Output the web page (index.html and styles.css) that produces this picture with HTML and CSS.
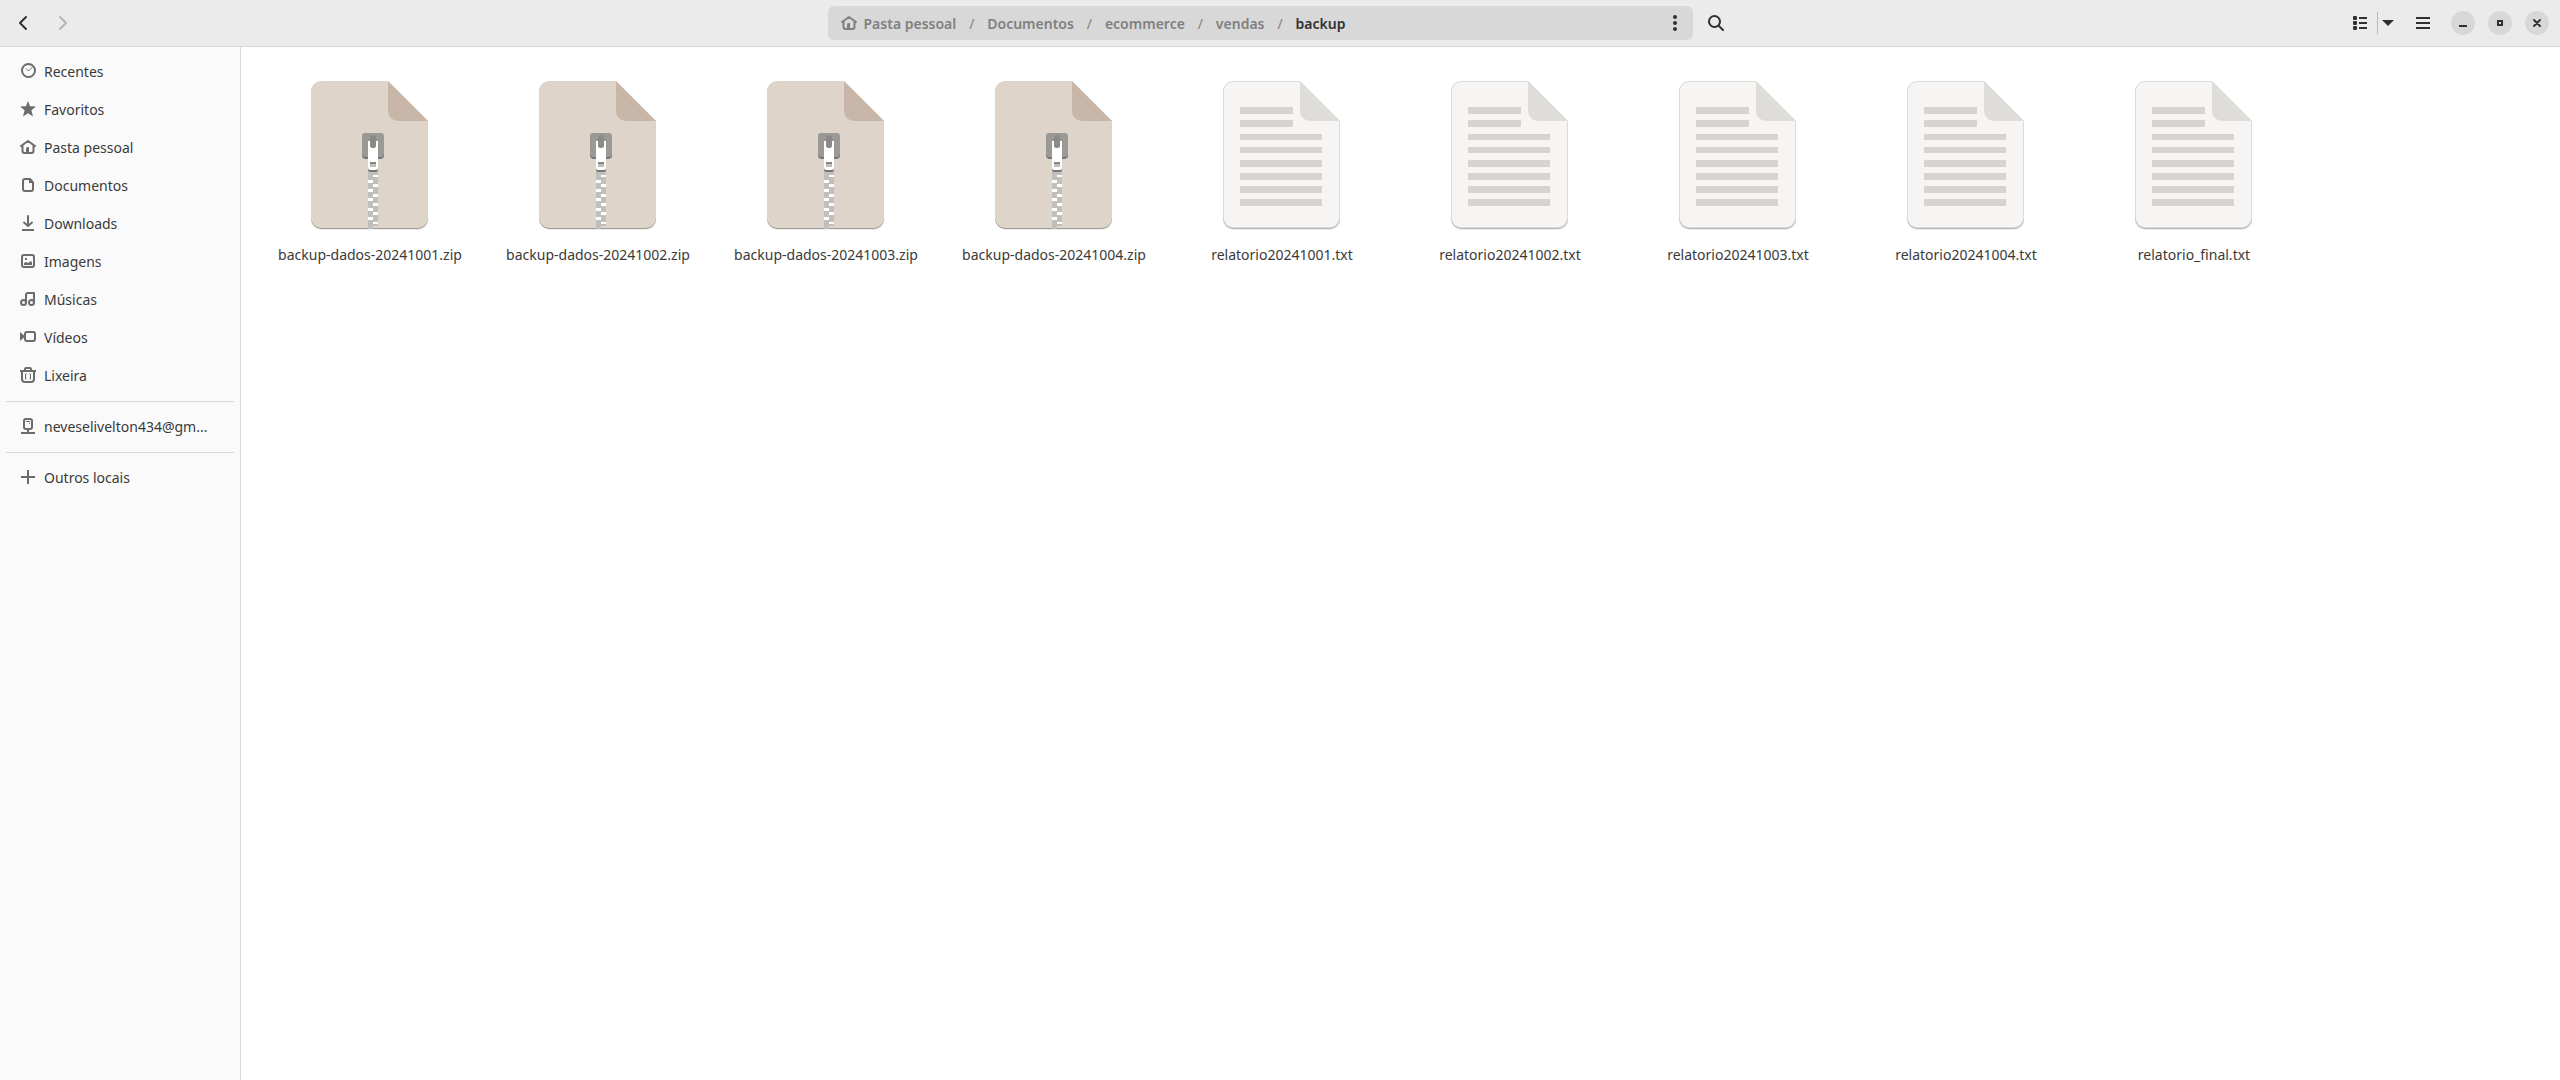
FILE: index.html
```html
<!DOCTYPE html>
<html lang="pt-BR">
<head>
<meta charset="utf-8">
<title>backup</title>
<link rel="stylesheet" href="styles.css">
</head>
<body>
<svg class="sprite" aria-hidden="true">
  <symbol id="home" viewBox="0 0 16 16"><path d="M1 7 8 2l7 5M2.500 7v5a2 2 0 0 0 2 2h7a2 2 0 0 0 2-2V7" fill="none" stroke="currentColor" stroke-width="2" stroke-linecap="round" stroke-linejoin="round"/><path d="M6 14V9.500a1.500 1.500 0 0 1 1.500-1.500H9v6z" fill="currentColor"/></symbol>
  <symbol id="zip" viewBox="0 0 118 152">
    <path d="M11 2h66l40 40v97a10 10 0 0 1-10 10H11a10 10 0 0 1-10-10V12A10 10 0 0 1 11 2z" fill="#000" opacity=".08"/>
    <path d="M10 1h67l40 40v97a10 10 0 0 1-10 10H10a10 10 0 0 1-10-10V11A10 10 0 0 1 10 1z" fill="#a19c98"/>
    <path d="M10 0h67l40 40v97a10 10 0 0 1-10 10H10a10 10 0 0 1-10-10V10A10 10 0 0 1 10 0z" fill="#ded4ca"/>
    <path d="M77 0l40 40H87a10 10 0 0 1-10-10z" fill="#c8b7a8"/>
    <path d="M57 91h10v54h-5v3h-5z" fill="#c0bfbc"/>
    <path d="M57 99h5v3h-5zm0 9h5v3h-5zm0 9h5v3h-5zm0 10h5v3h-5zm0 9h5v3h-5zM62 94h5v2h-5zm0 9h5v3h-5zm0 10h5v3h-5zm0 9h5v3h-5zm0 9h5v3h-5zm0 10h5v2h-5z" fill="#fff"/>
    <path d="M51 57h22v17q0 4-4 4H55q-4 0-4-4z" fill="#77767b"/>
    <path d="M54 52h16q3 0 3 3v17q0 4-4 4H55q-4 0-4-4V55q0-3 3-3z" fill="#9a9996"/>
    <path d="M57 80h10v9q0 2-2 2h-6q-2 0-2-2z" fill="#77767b"/>
    <path d="M57 60h2v4a3 3 0 0 0 6 0v-4h2v27q0 2-2 2h-6q-2 0-2-2z" fill="#fff"/>
    <path d="M59 57a3 3 0 0 1 6 0v7a3 3 0 0 1-6 0z" fill="#8b8a88"/>
    <path d="M59 81h6v5h-6z" fill="#c0bfbc"/><path d="M59 81h6v2h-6z" fill="#868583"/>
  </symbol>
  <symbol id="txt" viewBox="0 0 118 152">
    <path d="M11 2h66l40 40v97a10 10 0 0 1-10 10H11a10 10 0 0 1-10-10V12A10 10 0 0 1 11 2z" fill="#000" opacity=".08"/>
    <path d="M10 1h67l40 40v97a10 10 0 0 1-10 10H10a10 10 0 0 1-10-10V11A10 10 0 0 1 10 1z" fill="#b9b8b6"/>
    <path d="M10 0h67l40 40v97a10 10 0 0 1-10 10H10a10 10 0 0 1-10-10V10A10 10 0 0 1 10 0z" fill="#dcdbd9"/>
    <path d="M10 1h67l39 39v97a9 9 0 0 1-9 9H10a9 9 0 0 1-9-9V10A9 9 0 0 1 10 1z" fill="#f6f5f4"/>
    <path d="M77 0l40 40H87a10 10 0 0 1-10-10z" fill="#deddda"/>
    <path d="M17 26h53v7H17zm0 13h53v7H17zm0 14h82v6H17zm0 13h82v6H17zm0 13h82v7H17zm0 13h82v7H17zm0 13h82v7H17zm0 13h82v7H17z" fill="#d5d4d1"/>
  </symbol>
</svg>

<header class="header">
  <div class="header-start">
    <button class="tool" aria-label="Voltar"><svg viewBox="0 0 16 16"><path d="M11 2 5 8l6 6" class="line"/></svg></button>
    <button class="tool" aria-label="Avançar" disabled><svg viewBox="0 0 16 16"><path d="M5 2l6 6-6 6" class="line"/></svg></button>
  </div>
  <div class="header-center">
    <nav class="pathbar" aria-label="Caminho">
      <a class="crumb" href="#"><svg><use href="#home"/></svg>Pasta pessoal</a><span class="slash">/</span>
      <a class="crumb" href="#">Documentos</a><span class="slash">/</span>
      <a class="crumb" href="#">ecommerce</a><span class="slash">/</span>
      <a class="crumb" href="#">vendas</a><span class="slash">/</span>
      <a class="crumb current" href="#" aria-current="page">backup</a>
      <button class="tool more" aria-label="Mais opções"><svg viewBox="0 0 16 16"><circle cx="8" cy="2" r="2"/><circle cx="8" cy="8" r="2"/><circle cx="8" cy="14" r="2"/></svg></button>
    </nav>
    <button class="tool" aria-label="Pesquisar"><svg viewBox="0 0 16 16"><circle cx="6.500" cy="6.500" r="5.500" class="line"/><path d="M10.600 10.600 15 15" class="line"/></svg></button>
  </div>
  <div class="header-end">
    <div class="view-switch">
      <button class="tool" aria-label="Exibir como lista"><svg viewBox="0 0 16 16"><rect x="1" y="1" width="4" height="4" rx="1"/><rect x="1" y="6" width="4" height="4" rx="1"/><rect x="1" y="11" width="4" height="4" rx="1"/><path d="M7 2h8v2H7zm0 5h8v2H7zm0 5h8v2H7z"/></svg></button>
      <button class="tool narrow" aria-label="Opções de exibição"><svg viewBox="0 0 16 16"><path d="M2 5h12l-6 6z"/></svg></button>
    </div>
    <button class="tool" aria-label="Menu"><svg viewBox="0 0 16 16"><path d="M1 2h14v2H1zm0 5h14v2H1zm0 5h14v2H1z"/></svg></button>
    <div class="window-controls">
      <button class="round" aria-label="Minimizar"><svg viewBox="0 0 16 16"><path d="M4 10h8v2H4z"/></svg></button>
      <button class="round" aria-label="Maximizar"><svg viewBox="0 0 16 16"><path d="M5 5h6v6H5zm2 2v2h2V7z" fill-rule="evenodd"/></svg></button>
      <button class="round" aria-label="Fechar"><svg viewBox="0 0 16 16"><path d="M5 5l6 6m0-6-6 6" class="line"/></svg></button>
    </div>
  </div>
</header>

<div class="body">
  <nav class="sidebar" aria-label="Locais">
    <a class="place" href="#"><svg viewBox="0 0 16 16"><circle cx="8.500" cy="7.500" r="6.500" class="line"/><path d="M6 5.500l2.500 2.500 4-4" fill="none" stroke="currentColor"/></svg><span>Recentes</span></a>
    <a class="place" href="#"><svg viewBox="0 0 16 16"><path d="M8 0l2 5.300 6 .2-4.600 3.700L13 15.500l-5-3.300-5 3.300 1.600-6.300L0 5.500l6-.2z"/></svg><span>Favoritos</span></a>
    <a class="place" href="#"><svg><use href="#home"/></svg><span>Pasta pessoal</span></a>
    <a class="place" href="#"><svg viewBox="0 0 16 16"><path d="M5 2h5l3 3.500V12a2 2 0 0 1-2 2H5a2 2 0 0 1-2-2V4a2 2 0 0 1 2-2z" class="line"/><path d="M9 2v4h4l-3-4z"/></svg><span>Documentos</span></a>
    <a class="place" href="#"><svg viewBox="0 0 16 16"><path d="M8 1v10M4 7.500 8 11l4-3.500" class="line"/><path d="M2 14h12v2H2z"/></svg><span>Downloads</span></a>
    <a class="place" href="#"><svg viewBox="0 0 16 16"><rect x="2" y="2" width="12" height="12" rx="2" class="line"/><path d="M4 12V10l2-1 2 1 3-2 1 1.500V12zM5 5h2v2H5z"/></svg><span>Imagens</span></a>
    <a class="place" href="#"><svg viewBox="0 0 16 16"><circle cx="3.500" cy="11.500" r="2.500" class="line"/><circle cx="11.500" cy="11.500" r="2.500" class="line"/><path d="M6 11V4a2 2 0 0 1 2-2h6v9.500" class="line"/></svg><span>Músicas</span></a>
    <a class="place" href="#"><svg viewBox="0 0 16 16"><rect x="5" y="3" width="10" height="9" rx="2" class="line"/><path d="M0 3l4 3.500v2L0 12z"/></svg><span>Vídeos</span></a>
    <a class="place" href="#"><svg viewBox="0 0 16 16"><path d="M0 3h16v2H0z"/><path d="M5 3V2q0-1 1-1h4q1 0 1 1v1M2 4v8a3 3 0 0 0 3 3h6a3 3 0 0 0 3-3V4" class="line"/><path d="M6.500 7H5.500v5h1M9.500 7h1v5h-1" fill="none" stroke="currentColor"/></svg><span>Lixeira</span></a>
    <hr>
    <a class="place" href="#"><svg viewBox="0 0 16 16"><rect x="4" y="1" width="8" height="10" rx="2" class="line"/><path d="M7 11h2v3h6v2H1v-2h6zM6 3h4v1H6zm3 2h1v1H9z"/></svg><span>neveselivelton434@gm...</span></a>
    <hr>
    <a class="place" href="#"><svg viewBox="0 0 16 16"><path d="M7 1h2v6h6v2H9v6H7V9H1V7h6z"/></svg><span>Outros locais</span></a>
  </nav>
  <main class="files">
    <a class="file" href="#"><svg><use href="#zip"/></svg><span>backup-dados-20241001.zip</span></a>
    <a class="file" href="#"><svg><use href="#zip"/></svg><span>backup-dados-20241002.zip</span></a>
    <a class="file" href="#"><svg><use href="#zip"/></svg><span>backup-dados-20241003.zip</span></a>
    <a class="file" href="#"><svg><use href="#zip"/></svg><span>backup-dados-20241004.zip</span></a>
    <a class="file" href="#"><svg><use href="#txt"/></svg><span>relatorio20241001.txt</span></a>
    <a class="file" href="#"><svg><use href="#txt"/></svg><span>relatorio20241002.txt</span></a>
    <a class="file" href="#"><svg><use href="#txt"/></svg><span>relatorio20241003.txt</span></a>
    <a class="file" href="#"><svg><use href="#txt"/></svg><span>relatorio20241004.txt</span></a>
    <a class="file" href="#"><svg><use href="#txt"/></svg><span>relatorio_final.txt</span></a>
  </main>
</div>
</body>
</html>
```
FILE: styles.css
```css
* { box-sizing: border-box; }

body {
  margin: 0;
  min-height: 100vh;
  display: flex;
  flex-direction: column;
  background: #fff;
  color: #3a3a3a;
  font: 14px/20px "Noto Sans", "Open Sans", sans-serif;
}

a { color: inherit; text-decoration: none; }
svg { width: 16px; height: 16px; fill: currentColor; flex: none; }
.sprite { display: none; }
.line { fill: none; stroke: currentColor; stroke-width: 2; stroke-linecap: round; stroke-linejoin: round; }

.header {
  display: grid;
  grid-template-columns: 1fr minmax(0, 905px) 1fr;
  align-items: center;
  padding: 6px;
  background: #ebebeb;
  border-bottom: 1px solid #d8d8d8;
}
.header-start, .header-center, .header-end, .view-switch, .window-controls, .pathbar { display: flex; align-items: center; }
.header-start, .header-center, .header-end { gap: 6px; }
.header-end { justify-content: flex-end; }

.tool, .round {
  display: flex;
  align-items: center;
  justify-content: center;
  border: 0;
  padding: 0;
  background: none;
  color: #303030;
}
.tool { width: 34px; height: 34px; }
.tool:disabled { color: #b5b5b5; }
.narrow { width: 23px; height: 22px; padding-right: 2px; border-left: 1px solid #b8b8b8; }

.pathbar {
  flex: 1;
  height: 34px;
  padding: 0 1px 0 13px;
  border-radius: 6px;
  background: #d8d8d8;
  color: #808080;
  font-weight: 600;
}
.crumb { display: flex; align-items: center; gap: 7px; padding-top: 2px; }
.crumb svg { margin-bottom: 2px; }
.current { color: #303030; }
.slash { width: 31px; padding-top: 2px; text-align: center; font-weight: 400; }
.more { margin-left: auto; }

.window-controls { gap: 13px; padding: 0 5px; }
.round { width: 24px; height: 24px; border-radius: 50%; background: #d8d8d8; }

.body { flex: 1; display: flex; }

.sidebar {
  width: 241px;
  flex: none;
  padding: 5px 6px;
  background: #fafafa;
  border-right: 1px solid #d8d8d8;
}
.place { display: flex; align-items: center; gap: 8px; height: 38px; padding: 0 14px; }
.place svg { color: #6c6c6c; }
.place span { padding-top: 2px; white-space: nowrap; }
.sidebar hr { height: 1px; margin: 7px 0 5px; border: 0; background: #d8d8d8; }

.files {
  flex: 1;
  display: grid;
  grid-template-columns: repeat(auto-fill, 228px);
  align-content: start;
  gap: 18px 0;
  padding: 34px 15px;
}
.file { display: flex; flex-direction: column; align-items: center; gap: 12px; }
.file svg { width: 118px; height: 152px; }
```
